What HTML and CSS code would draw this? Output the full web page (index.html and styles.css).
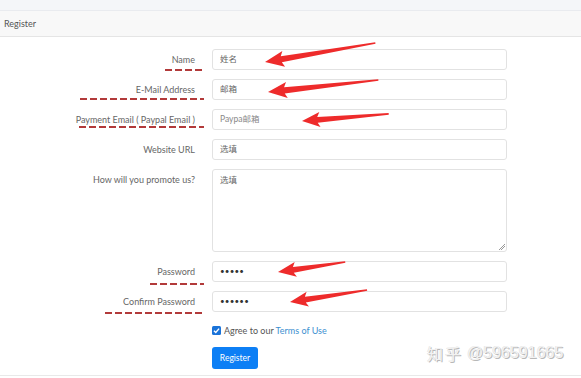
FILE: index.html
```html
<!DOCTYPE html>
<html lang="en">
<head>
<meta charset="utf-8">
<title>Register</title>
<link rel="stylesheet" href="styles.css">
</head>
<body>
<div class="page">
  <div class="topbar"></div>
  <div class="card">
    <div class="card-header">Register</div>
    <div class="card-body">
      <form class="form">
        <label class="label">Name<span class="mark mark-name"></span></label>
        <div class="input">姓名</div>

        <label class="label">E-Mail Address<span class="mark mark-email"></span></label>
        <div class="input">邮箱</div>

        <label class="label">Payment Email ( Paypal Email )<span class="mark mark-pay"></span></label>
        <div class="input placeholder">Paypa邮箱</div>

        <label class="label">Website URL</label>
        <div class="input">选填</div>

        <label class="label">How will you promote us?</label>
        <div class="input textarea">选填<span class="grip"></span></div>

        <label class="label">Password<span class="mark mark-pass"></span></label>
        <div class="input dots">•••••</div>

        <label class="label">Confirm Password<span class="mark mark-confirm"></span></label>
        <div class="input dots">••••••</div>

        <div class="check-row">
          <span class="checkbox"><svg viewBox="0 0 10 10" width="9" height="9"><path d="M2.2 5.2 L4.2 7.2 L7.9 2.9" fill="none" stroke="#fff" stroke-width="1.6"/></svg></span>
          <span>Agree to our <span class="link">Terms of Use</span></span>
        </div>
        <div class="btn-row"><span class="btn">Register</span></div>
      </form>
    </div>
  </div>
  <div class="watermark"><span class="wm-cjk">知乎</span><span class="wm-id">@596591665</span></div>
  <svg class="arrows" width="581" height="378" viewBox="0 0 581 378">
    <g fill="#ee2b2b">
      <polygon transform="translate(265 62) rotate(-9.8)" points="0,0 19,-8 16.5,-3 112,-0.8 112,0.8 16.5,3.2 19,8"/>
      <polygon transform="translate(268 92) rotate(-6.2)" points="0,0 19,-8 16.5,-3 111,-0.8 111,0.8 16.5,3.2 19,8"/>
      <polygon transform="translate(302 121) rotate(-4.7)" points="0,0 18,-7.5 15.5,-2.8 87,-0.8 87,0.8 15.5,3 18,7.5"/>
      <polygon transform="translate(278 272) rotate(-8.5)" points="0,0 18,-7.5 15.5,-2.8 68,-0.8 68,0.8 15.5,3 18,7.5"/>
      <polygon transform="translate(290 302) rotate(-8.9)" points="0,0 18,-7.5 15.5,-2.8 78,-0.8 78,0.8 15.5,3 18,7.5"/>
    </g>
  </svg>
</div>
</body>
</html>
```

FILE: styles.css
```css
html, body {
  margin: 0;
  padding: 0;
  background: #fff;
}

.page {
  position: relative;
  width: 581px;
  height: 378px;
  overflow: hidden;
  font-family: Lato, "Noto Sans CJK SC", sans-serif;
  font-size: 9px;
  color: #666;
}

.topbar {
  height: 10px;
  background: #f4f6f9;
  border-bottom: 1px solid #e9ebef;
}

.card {
  border-bottom: 1px solid #e9e9e9;
}

.card-header {
  height: 25px;
  line-height: 25px;
  padding-left: 4px;
  background: #f8f8f8;
  border-bottom: 1px solid #e5e5e5;
  color: #555;
}

.card-body {
  padding: 12px 0 6px 0;
}

.form {
  display: grid;
  grid-template-columns: 204px 295px;
  column-gap: 8px;
  row-gap: 9px;
}

.label {
  position: relative;
  text-align: right;
  padding-right: 9px;
  line-height: 21px;
  color: #666;
  white-space: nowrap;
}

.mark {
  position: absolute;
  right: 0;
  height: 2px;
  background: repeating-linear-gradient(to right, #b23a3a 0 7px, transparent 7px 10px);
}
.mark-name { width: 39px; top: 20px; }
.mark-email { width: 124px; top: 19px; }
.mark-pay { width: 125px; top: 17px; }
.mark-pass { width: 54px; top: 22px; }
.mark-confirm { width: 99px; top: 21px; }

.input {
  position: relative;
  box-sizing: border-box;
  height: 21px;
  line-height: 19px;
  padding: 0 7px;
  border: 1px solid #e2e2e2;
  border-radius: 3px;
  background: #fff;
  color: #666;
  font-size: 8.5px;
}

.placeholder {
  color: #888;
}

.textarea {
  height: 83px;
  line-height: 16px;
  padding-top: 2px;
}

.grip {
  position: absolute;
  right: 1px;
  bottom: 1px;
  width: 7px;
  height: 7px;
  background: linear-gradient(135deg, transparent 0 50%, #999 50% 58%, transparent 58% 70%, #999 70% 78%, transparent 78%);
}

.dots {
  color: #333;
  font-size: 8px;
  letter-spacing: 0.2px;
}

.check-row {
  grid-column: 2;
  display: flex;
  align-items: center;
  gap: 3px;
  margin-top: 2px;
  height: 14px;
  color: #555;
}

.checkbox {
  display: flex;
  align-items: center;
  justify-content: center;
  width: 9px;
  height: 9px;
  background: #1a73d9;
  border-radius: 1.5px;
}

.link {
  color: #3d8fd0;
}

.btn-row {
  grid-column: 2;
  margin-top: 1px;
  display: flex;
}

.btn {
  display: inline-block;
  width: 46px;
  height: 22px;
  line-height: 22px;
  text-align: center;
  background: #0d7ff5;
  color: #fff;
  border-radius: 3px;
  font-size: 8.5px;
}

.watermark {
  position: absolute;
  left: 427px;
  top: 343px;
  display: flex;
  align-items: center;
  gap: 4px;
  height: 20px;
  color: #f2f2f2;
  text-shadow: 1px 1px 0 #b8b8b8, -0.5px -0.5px 0 #e2e2e2;
  white-space: nowrap;
}

.wm-cjk {
  font-family: "Noto Sans CJK SC", sans-serif;
  font-size: 16px;
  letter-spacing: 2px;
}

.wm-id {
  font-family: "Liberation Sans", sans-serif;
  font-size: 16px;
  letter-spacing: 0;
}

.arrows {
  position: absolute;
  left: 0;
  top: 0;
  pointer-events: none;
}
```
